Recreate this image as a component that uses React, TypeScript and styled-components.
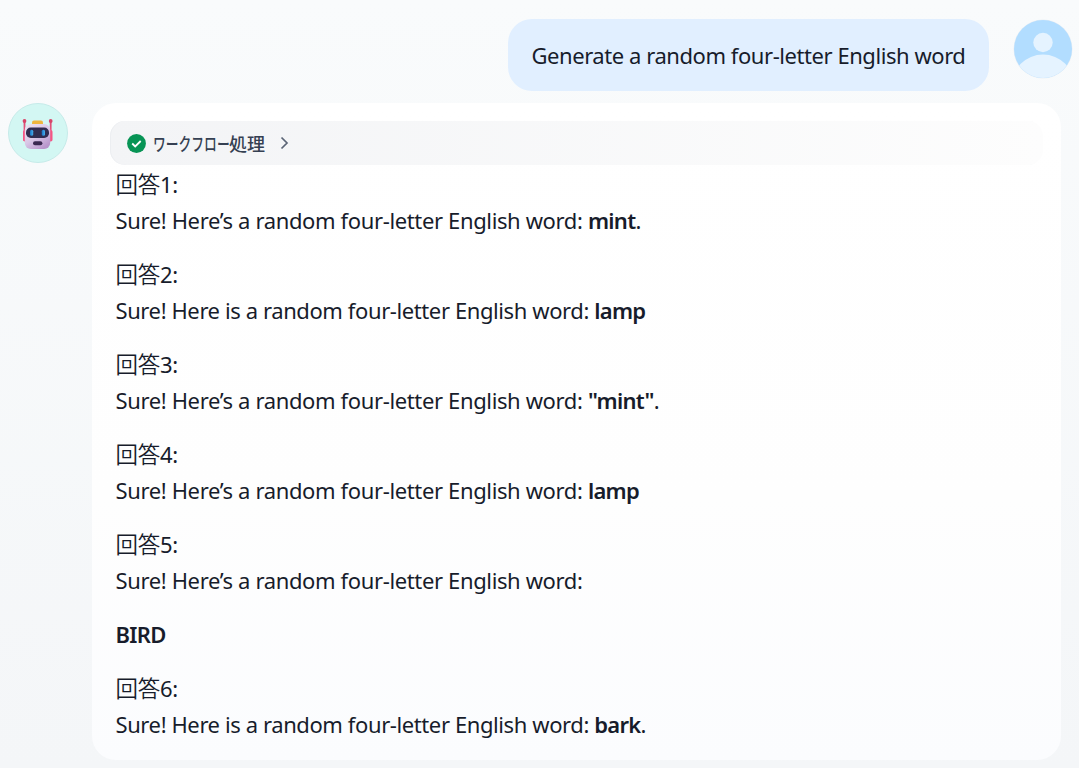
import React from 'react';
import styled, { createGlobalStyle } from 'styled-components';

const GlobalStyle = createGlobalStyle`
  * { box-sizing: border-box; }
  body {
    margin: 0;
    overflow: hidden;
    background: #f8fafc;
    font-family: 'Noto Sans', 'Noto Sans CJK JP', sans-serif;
    color: #171c2b;
  }
`;

const Chat = styled.main`
  display: flex;
  flex-direction: column;
  gap: 12px;
  width: 1079px;
  height: 768px;
  padding: 19px 6px 0 8px;
  background: linear-gradient(#f9fbfc, #f4f6f8);
`;

const Row = styled.div<{ $own?: boolean }>`
  display: flex;
  align-items: flex-start;
  justify-content: ${(p) => (p.$own ? 'flex-end' : 'flex-start')};
  gap: 24px;
`;

const Avatar = styled.svg<{ $size: number }>`
  flex: none;
  display: block;
  width: ${(p) => p.$size}px;
  height: ${(p) => p.$size}px;
`;

const Question = styled.div`
  width: 481px;
  height: 72px;
  padding: 18px 0 18px 23.5px;
  border-radius: 24px;
  background: #e1efff;
`;

const Answer = styled.article`
  width: 969px;
  height: 657px;
  padding: 18px;
  border-radius: 24px;
  background: linear-gradient(#ffffff 0%, #fefefe 60%, #fbfcfe 100%);
`;

const Line = styled.p<{ $spacing?: number }>`
  margin: 0;
  font-size: 22px;
  line-height: 36px;
  letter-spacing: ${(p) => p.$spacing ?? -0.4}px;
  white-space: nowrap;
`;

const Kanji = styled.span`
  font-family: 'Noto Sans CJK JP', sans-serif;
  font-size: 22.5px;
  font-weight: 350;
  letter-spacing: -0.2px;
  line-height: 1;
`;

const Strong = styled.strong`
  font-weight: 600;
  letter-spacing: -0.7px;
`;

const Workflow = styled.div`
  display: flex;
  align-items: center;
  width: 933px;
  height: 44px;
  padding-left: 17px;
  border-radius: 15px;
  background: linear-gradient(90deg, #f3f4f6, #fdfdfd);
  box-shadow: inset 1px 0 0 #eceef1;
`;

const WorkflowLabel = styled.span`
  display: flex;
  width: 112px;
  margin-left: 7px;
  font: 500 18px/24px 'Noto Sans CJK JP', sans-serif;
  color: #354052;
  white-space: nowrap;
`;

const Kana = styled.span`
  width: 76px;
  font-weight: 500;
  transform: scaleX(0.71);
  transform-origin: left;
`;

const Messages = styled.div`
  display: flex;
  flex-direction: column;
  gap: 18px;
  padding: 1px 5.5px 0;
`;

const answers = [
  { n: 1, text: 'Sure! Here’s a random four-letter English word: ', word: 'mint', end: '.', spacing: -0.365 },
  { n: 2, text: 'Sure! Here is a random four-letter English word: ', word: 'lamp', end: '', spacing: -0.4 },
  { n: 3, text: 'Sure! Here’s a random four-letter English word: ', word: '"mint"', end: '.', spacing: -0.365 },
  { n: 4, text: 'Sure! Here’s a random four-letter English word: ', word: 'lamp', end: '', spacing: -0.365 },
  { n: 5, text: 'Sure! Here’s a random four-letter English word:', word: '', end: '', spacing: -0.365, below: 'BIRD' },
  { n: 6, text: 'Sure! Here is a random four-letter English word: ', word: 'bark', end: '.', spacing: -0.4 },
];

const UserAvatar = () => (
  <Avatar $size={60} viewBox="0 0 60 60">
    <defs>
      <clipPath id="user"><circle cx="30" cy="30" r="29" /></clipPath>
    </defs>
    <circle cx="30" cy="30" r="29.5" fill="#e9eff5" />
    <g clipPath="url(#user)">
      <rect width="60" height="60" fill="#b2ddff" />
      <circle cx="30" cy="23.5" r="9.7" fill="#e5f3ff" />
      <circle cx="30" cy="67" r="31.5" fill="#e5f3ff" />
    </g>
  </Avatar>
);

const RobotAvatar = () => (
  <Avatar $size={60} viewBox="0 0 60 60">
    <defs>
      <linearGradient id="face" x1="0" y1="0" x2="0.7" y2="1">
        <stop offset="0" stopColor="#eee5f3" />
        <stop offset="0.55" stopColor="#d9c7e6" />
        <stop offset="1" stopColor="#b895cb" />
      </linearGradient>
      <linearGradient id="rod" gradientUnits="userSpaceOnUse" x1="0" y1="18" x2="0" y2="38">
        <stop offset="0" stopColor="#d84b72" />
        <stop offset="1" stopColor="#ff648f" />
      </linearGradient>
      <linearGradient id="eye" x1="0" y1="0" x2="1" y2="0">
        <stop offset="0" stopColor="#1974c4" />
        <stop offset="1" stopColor="#49b0ec" />
      </linearGradient>
    </defs>
    <circle cx="30" cy="30" r="29.5" fill="#d3f7f3" stroke="#c6ebe9" />
    <path d="M16.5 18v20M42.7 18v20" stroke="url(#rod)" strokeWidth="1.8" />
    <rect x="15" y="27" width="4" height="11.5" rx="1.8" fill="#f45684" />
    <rect x="40.5" y="27" width="4" height="11.5" rx="1.8" fill="#f45684" />
    <circle cx="16.5" cy="18" r="1.9" fill="#d84569" />
    <circle cx="42.7" cy="18" r="1.9" fill="#d84569" />
    <rect x="24" y="17.5" width="11" height="6" rx="2" fill="#eeb63e" />
    <rect x="16.8" y="21" width="25.4" height="25" rx="6" fill="url(#face)" />
    <rect x="18" y="24.5" width="23" height="10.5" rx="4.8" fill="#302d50" />
    <rect x="22" y="26.8" width="3.2" height="6" rx="1.5" fill="url(#eye)" />
    <rect x="33.8" y="26.8" width="3.2" height="6" rx="1.5" fill="url(#eye)" />
    <rect x="25" y="38.2" width="9.4" height="4" rx="2" fill="#3a2850" />
  </Avatar>
);

const CheckIcon = () => (
  <svg width="19" height="19" viewBox="0 0 19 19">
    <circle cx="9.5" cy="9.5" r="9.4" fill="#079455" />
    <path d="M5.2 9.5l3 3 5.5-5.5" fill="none" stroke="#fff" strokeWidth="1.8" />
  </svg>
);

const Chevron = styled.svg`
  width: 9px;
  height: 14px;
  margin-left: 15px;
`;

export default function App() {
  return (
    <>
      <GlobalStyle />
      <Chat>
        <Row $own>
          <Question>
            <Line $spacing={-0.44}>Generate a random four-letter English word</Line>
          </Question>
          <UserAvatar />
        </Row>
        <Row>
          <RobotAvatar />
          <Answer>
            <Workflow>
              <CheckIcon />
              <WorkflowLabel><Kana>ワークフロー</Kana>処理</WorkflowLabel>
              <Chevron viewBox="0 0 9 14">
                <path d="M1.5 1.5L7 7l-5.5 5.5" fill="none" stroke="#5b6576" strokeWidth="1.7" />
              </Chevron>
            </Workflow>
            <Messages>
              {answers.map((a) => (
                <React.Fragment key={a.n}>
                  <div>
                    <Line><Kanji>回答</Kanji>{a.n}:</Line>
                    <Line $spacing={a.spacing}>{a.text}{a.word && <Strong>{a.word}</Strong>}{a.end}</Line>
                  </div>
                  {a.below && <Line><Strong>{a.below}</Strong></Line>}
                </React.Fragment>
              ))}
            </Messages>
          </Answer>
        </Row>
      </Chat>
    </>
  );
}
